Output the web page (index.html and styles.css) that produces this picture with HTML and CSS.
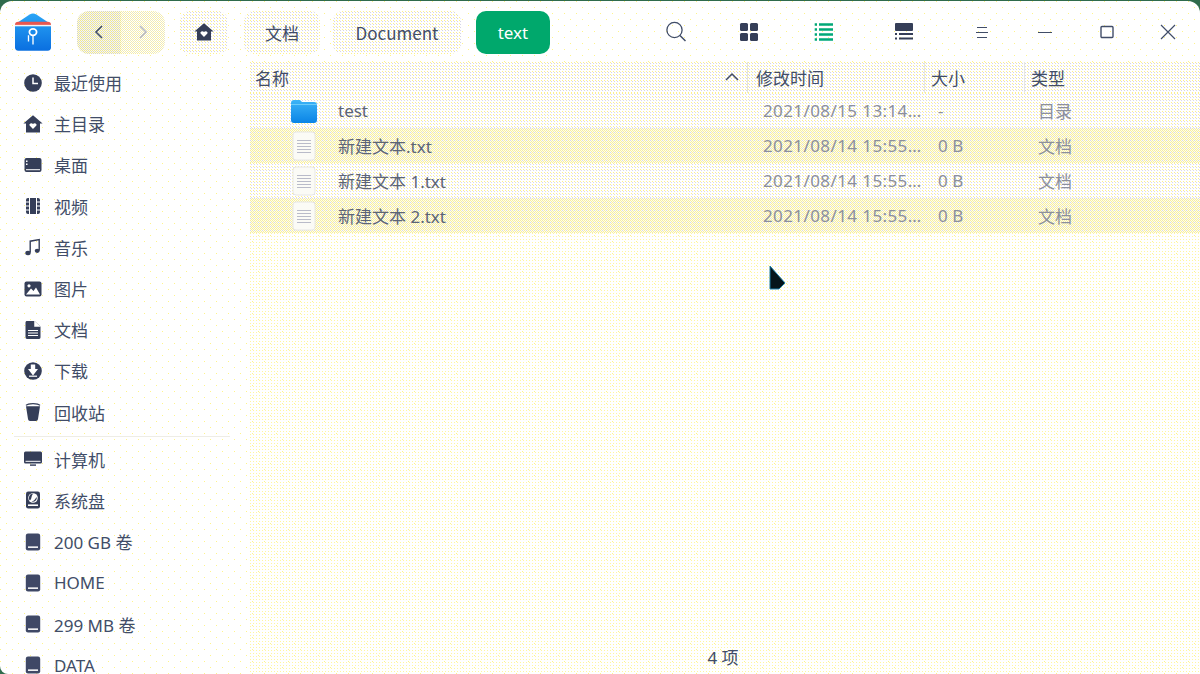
FILE: index.html
```html
<!DOCTYPE html>
<html lang="zh-CN">
<head>
<meta charset="utf-8">
<title>文件管理器</title>
<link rel="stylesheet" href="styles.css">
</head>
<body>
<svg class="defs" width="0" height="0" aria-hidden="true">
  <defs>
    <linearGradient id="blue" x1="0" y1="0" x2="0" y2="1"><stop offset="0" stop-color="#2aa5f5"/><stop offset="1" stop-color="#0a6fe0"/></linearGradient>
    <linearGradient id="fold" x1="0" y1="0" x2="0" y2="1"><stop offset="0" stop-color="#3db4f7"/><stop offset="1" stop-color="#0a84e6"/></linearGradient>
    <symbol id="i-clock" viewBox="0 0 20 20"><circle cx="10" cy="10" r="8.8" fill="#353e58"/><path d="M10 4.5V10.5H15" fill="none" stroke="#fff" stroke-width="1.5"/></symbol>
    <symbol id="i-home" viewBox="0 0 20 20"><path d="M10 1.2 19.6 9.6H17V18.4H3V9.6H.4Z" fill="#353e58"/><path d="M10 15 6.6 11.6C5.6 9.8 8.5 8.2 10 10 11.5 8.2 14.4 9.8 13.4 11.6Z" fill="#fff"/></symbol>
    <symbol id="i-desk" viewBox="0 0 20 20"><rect x="1.5" y="3" width="17" height="14" rx="2" fill="#353e58"/><rect x="3" y="14.2" width="14" height="1" fill="#fff"/><rect x="3" y="5.5" width="1.5" height="1.5" fill="#fff"/><rect x="3" y="8.5" width="1.5" height="1.5" fill="#fff"/></symbol>
    <symbol id="i-video" viewBox="0 0 20 20"><rect x="3" y="2" width="14" height="16" rx="2" fill="#353e58"/><path d="M6.5 2V18M13.5 2V18M3 6H6.5M3 10H6.5M3 14H6.5M13.5 6H17M13.5 10H17M13.5 14H17" stroke="#fff" stroke-width="1"/></symbol>
    <symbol id="i-music" viewBox="0 0 20 20"><path d="M7.2 15.5V4.2L16.2 2.6V13.5" fill="none" stroke="#353e58" stroke-width="1.4"/><ellipse cx="5" cy="16" rx="2.7" ry="2.2" fill="#353e58"/><ellipse cx="14.2" cy="13.8" rx="2.5" ry="2.1" fill="#353e58"/></symbol>
    <symbol id="i-pic" viewBox="0 0 20 20"><rect x="1.5" y="2.5" width="17" height="15" rx="2" fill="#353e58"/><circle cx="6" cy="6.8" r="1.6" fill="#fff"/><path d="M3 15.5 8 9.5 10.5 12 13 8.5 17 15.5Z" fill="#fff"/></symbol>
    <symbol id="i-doc" viewBox="0 0 20 20"><path d="M2.5 2.5C2.5 1.7 3 1 4 1H11.5L17.5 6.5V17C17.5 18.2 17 19 16 19H4C3 19 2.5 18.2 2.5 17Z" fill="#353e58"/><path d="M11.5 1V6.5H17.5" fill="#fff" stroke="#fff" stroke-width=".5"/><path d="M5 10.5H15M5 13H15M5 15.5H15" stroke="#fff" stroke-width="1"/></symbol>
    <symbol id="i-down" viewBox="0 0 20 20"><circle cx="10" cy="10" r="8.8" fill="#353e58"/><path d="M7.8 3.5H12.2V8H15L10 14.5 5 8H7.8Z" fill="#fff"/><rect x="6" y="14.6" width="8" height="1.2" fill="#fff"/></symbol>
    <symbol id="i-trash" viewBox="0 0 20 20"><path d="M3 4.2 5 17C5.2 18.3 6 19 7 19H13C14 19 14.8 18.3 15 17L17 4.2Z" fill="#353e58"/><path d="M3 3.4C5 1 15 1 17 3.4" fill="none" stroke="#353e58" stroke-width="1.2"/></symbol>
    <symbol id="i-pc" viewBox="0 0 20 20"><rect x="1" y="2.5" width="18" height="12" rx="1.5" fill="#353e58"/><rect x="2.5" y="11.8" width="15" height="1" fill="#fff"/><rect x="7" y="15.4" width="6" height="1.4" fill="#353e58"/></symbol>
    <symbol id="i-sys" viewBox="0 0 20 20"><rect x="3" y="1.5" width="14" height="17" rx="2.2" fill="#353e58"/><circle cx="10" cy="8" r="4.8" fill="#fff"/><path d="M10 3.8A4 4 0 0 0 7 10.6C9 8.5 8 6 10 3.8ZM13.8 7A4 4 0 0 1 8.6 11.6C11 11.5 12 9 13.8 7Z" fill="#353e58"/><rect x="5" y="14.4" width="10" height="1.6" fill="#fff"/></symbol>
    <symbol id="i-disk" viewBox="0 0 20 20"><rect x="2.8" y="1.5" width="14.4" height="17" rx="2.2" fill="#3f4866"/><rect x="5" y="14.4" width="10" height="1.5" fill="#fff"/></symbol>
    <symbol id="i-file" viewBox="0 0 26 30"><rect x="2" y="1" width="22" height="28" rx="3" fill="#fbfbf6" stroke="#e6e6e6" stroke-width="1"/><path d="M6 9.5H20M6 12.5H20M6 15.5H20M6 18.5H20M6 21.5H20" stroke="#b9bbc9" stroke-width="1"/></symbol>
  </defs>
</svg>

<div class="window">
  <header class="toolbar">
    <svg class="logo" viewBox="2 0.5 32 36.8" preserveAspectRatio="none">
      <path d="M2 13C2 12 3 11 4 10L15 2C17 .6 19 .6 21 2L32 10C33 11 34 12 34 13V34C34 36 33 37 31 37H5C3 37 2 36 2 34Z" fill="url(#blue)"/>
      <path d="M2 12C2 10 3 9 5 9H31C33 9 34 10 34 12Z" fill="#e8574f"/>
      <rect x="2" y="12" width="32" height="1.4" fill="#f4f4f4"/>
      <circle cx="18" cy="19" r="3.2" fill="none" stroke="#fff" stroke-width="1.6"/>
      <path d="M18 22.5V31M14 22V28" stroke="#fff" stroke-width="1.2" fill="none"/>
    </svg>
    <div class="nav">
      <button class="nav-btn dense-a" type="button"><svg width="12" height="16" viewBox="0 0 12 16"><path d="M9 2 3 8 9 14" fill="none" stroke="#414d68" stroke-width="1.6"/></svg></button>
      <button class="nav-btn dense-c" type="button"><svg width="12" height="16" viewBox="0 0 12 16"><path d="M3 2 9 8 3 14" fill="none" stroke="#b8bac4" stroke-width="1.6"/></svg></button>
    </div>
    <button class="crumb crumb-home dense-b" type="button"><svg class="ico" width="20" height="20"><use href="#i-home"/></svg></button>
    <button class="crumb crumb-doc dense-b" type="button">文档</button>
    <button class="crumb crumb-en dense-b" type="button">Document</button>
    <button class="crumb crumb-now" type="button">text</button>
    <div class="tools">
      <span class="tool"><svg width="24" height="24" viewBox="0 0 24 24"><circle cx="10.5" cy="10" r="7.6" fill="none" stroke="#414d68" stroke-width="1.3"/><path d="M16 15.5 21.5 21" stroke="#414d68" stroke-width="1.5"/></svg></span>
      <span class="tool"><svg width="20" height="20" viewBox="0 0 20 20"><rect x="1" y="1" width="8" height="8" rx="1.5" fill="#353e58"/><rect x="11" y="1" width="8" height="8" rx="1.5" fill="#353e58"/><rect x="1" y="11" width="8" height="8" rx="1.5" fill="#353e58"/><rect x="11" y="11" width="8" height="8" rx="1.5" fill="#353e58"/></svg></span>
      <span class="tool"><svg width="20" height="20" viewBox="0 0 20 20"><path d="M5 2.5H19M5 7.5H19M5 12.5H19M5 17.5H19M.7 2.5H3M.7 7.5H3M.7 12.5H3M.7 17.5H3" stroke="#00a878" stroke-width="2.4"/></svg></span>
      <span class="tool"><svg width="20" height="20" viewBox="0 0 20 20"><rect x="1" y="1" width="18" height="8" rx="1" fill="#353e58"/><path d="M5 12H19M5 16.5H19M1 12H3M1 16.5H3" stroke="#353e58" stroke-width="1.8"/></svg></span>
      <span class="tool"><svg width="16" height="16" viewBox="0 0 16 16"><path d="M3 3.5H13M2 8.5H14M3 13.5H13" stroke="#414d68" stroke-width="1"/></svg></span>
      <span class="tool"><svg width="16" height="16" viewBox="0 0 16 16"><path d="M1 8.5H15" stroke="#414d68" stroke-width="1"/></svg></span>
      <span class="tool"><svg width="16" height="16" viewBox="0 0 16 16"><rect x="2" y="2.5" width="12" height="11" rx="1" fill="none" stroke="#414d68" stroke-width="1.4"/></svg></span>
      <span class="tool"><svg width="16" height="16" viewBox="0 0 16 16"><path d="M1 1 15 15M15 1 1 15" stroke="#414d68" stroke-width="1.2"/></svg></span>
    </div>
  </header>

  <div class="body">
    <nav class="sidebar">
      <a class="side-item"><svg class="ico" width="20" height="20"><use href="#i-clock"/></svg>最近使用</a>
      <a class="side-item"><svg class="ico" width="20" height="20"><use href="#i-home"/></svg>主目录</a>
      <a class="side-item"><svg class="ico" width="20" height="20"><use href="#i-desk"/></svg>桌面</a>
      <a class="side-item"><svg class="ico" width="20" height="20"><use href="#i-video"/></svg>视频</a>
      <a class="side-item"><svg class="ico" width="20" height="20"><use href="#i-music"/></svg>音乐</a>
      <a class="side-item"><svg class="ico" width="20" height="20"><use href="#i-pic"/></svg>图片</a>
      <a class="side-item"><svg class="ico" width="20" height="20"><use href="#i-doc"/></svg>文档</a>
      <a class="side-item"><svg class="ico" width="20" height="20"><use href="#i-down"/></svg>下载</a>
      <a class="side-item"><svg class="ico" width="20" height="20"><use href="#i-trash"/></svg>回收站</a>
      <div class="side-sep"></div>
      <a class="side-item"><svg class="ico" width="20" height="20"><use href="#i-pc"/></svg>计算机</a>
      <a class="side-item"><svg class="ico" width="20" height="20"><use href="#i-sys"/></svg>系统盘</a>
      <a class="side-item"><svg class="ico" width="20" height="20"><use href="#i-disk"/></svg>200 GB 卷</a>
      <a class="side-item"><svg class="ico" width="20" height="20"><use href="#i-disk"/></svg>HOME</a>
      <a class="side-item"><svg class="ico" width="20" height="20"><use href="#i-disk"/></svg>299 MB 卷</a>
      <a class="side-item"><svg class="ico" width="20" height="20"><use href="#i-disk"/></svg>DATA</a>
    </nav>

    <main class="content">
      <div class="thead dense-b">
        <div class="th th-name">名称<svg class="sort" width="16" height="10" viewBox="0 0 16 10"><path d="M2 8 8 2 14 8" fill="none" stroke="#414d68" stroke-width="1.5"/></svg></div>
        <div class="th th-mid">修改时间</div>
        <div class="th th-mid">大小</div>
        <div class="th">类型</div>
      </div>
      <div class="rows">
        <div class="row row-light">
          <div class="cell-name"><svg class="file-ico" width="26" height="30" viewBox="0 0 26 30"><path d="M0 7C0 5 1 4 3 4H9L11 6H23C25 6 26 7 26 9V24C26 26 25 27 23 27H3C1 27 0 26 0 24Z" fill="url(#fold)"/><rect x="0" y="8" width="26" height="1" fill="#6ccbfa"/></svg>test</div>
          <div class="cell-date">2021/08/15 13:14:20</div><div class="cell-size">-</div><div class="cell-type">目录</div>
        </div>
        <div class="row row-strong">
          <div class="cell-name"><svg class="file-ico" width="26" height="30"><use href="#i-file"/></svg>新建文本.txt</div>
          <div class="cell-date">2021/08/14 15:55:10</div><div class="cell-size">0 B</div><div class="cell-type">文档</div>
        </div>
        <div class="row row-light">
          <div class="cell-name"><svg class="file-ico" width="26" height="30"><use href="#i-file"/></svg>新建文本 1.txt</div>
          <div class="cell-date">2021/08/14 15:55:10</div><div class="cell-size">0 B</div><div class="cell-type">文档</div>
        </div>
        <div class="row row-strong">
          <div class="cell-name"><svg class="file-ico" width="26" height="30"><use href="#i-file"/></svg>新建文本 2.txt</div>
          <div class="cell-date">2021/08/14 15:55:10</div><div class="cell-size">0 B</div><div class="cell-type">文档</div>
        </div>
      </div>
      <footer class="status">4 项</footer>
    </main>
  </div>
</div>

<svg class="cursor" width="20" height="28" viewBox="0 0 20 28"><path d="M2 1 17 18 11 24H2Z" fill="#05141a" stroke="#1f7fa8" stroke-width="1"/></svg>
</body>
</html>
```

FILE: styles.css
```css
* { box-sizing: border-box; }

html, body {
  margin: 0;
  height: 100%;
  overflow: hidden;
}

body {
  background: #2f6b4c;
  font-family: "Noto Sans", "Noto Sans CJK SC", sans-serif;
  font-size: 17px;
  color: #414d68;
  padding-top: 1px;
}

.defs { position: absolute; }

.window {
  height: 100%;
  display: flex;
  flex-direction: column;
  border-radius: 12px 12px 0 8px;
  overflow: hidden;
  background-color: #fff;
  background-image:
    conic-gradient(at 1px 1px, transparent 75%, #fff48a 0),
    conic-gradient(at 1px 1px, transparent 75%, #fff48a 0);
  background-size: 12px 12px;
  background-position: 0 0, 6px 6px;
}

/* dithered fills */
.dense-a {
  background-color: #fdfbe4;
  background-image:
    conic-gradient(at 1px 1px, transparent 75%, #d6d6cc 0),
    conic-gradient(at 1px 1px, transparent 75%, #ece496 0);
  background-size: 2px 2px;
  background-position: 0 0, 1px 1px;
}

.dense-b {
  background-color: #fff;
  background-image:
    conic-gradient(at 1px 1px, transparent 75%, #fdf08c 0),
    conic-gradient(at 1px 1px, transparent 75%, #d4d4e8 0);
  background-size: 3px 3px;
  background-position: 0 0, 1px 1px;
}

.dense-c {
  background-color: #fff;
  background-image:
    conic-gradient(at 1px 1px, transparent 75%, #f8efa0 0),
    conic-gradient(at 1px 1px, transparent 75%, #ece8c0 0);
  background-size: 2px 2px;
  background-position: 0 0, 1px 1px;
}

/* toolbar */
.toolbar {
  height: 61px;
  flex: none;
  display: flex;
  align-items: center;
  padding-left: 15px;
  padding-top: 1px;
}

.logo { width: 36px; height: 38px; flex: none; }

.nav {
  display: flex;
  height: 43px;
  margin-left: 26px;
  border-radius: 12px;
  overflow: hidden;
}

.nav-btn {
  width: 44px;
  border: 0;
  padding: 0;
  display: flex;
  align-items: center;
  justify-content: center;
}

.crumb {
  height: 43px;
  border: 0;
  padding: 0;
  margin-left: 15px;
  border-radius: 10px;
  font: inherit;
  color: #414d68;
  display: flex;
  align-items: center;
  justify-content: center;
}

.crumb-home { width: 48px; }
.crumb-doc { width: 76px; margin-left: 16px; }
.crumb-en { width: 128px; margin-left: 13px; font-family: "Noto Sans CJK SC", sans-serif; }
.crumb-now { width: 74px; background: #00a86c; color: #fff; }

.tools {
  margin-left: auto;
  display: grid;
  grid-template-columns: 72px 74px 76px 84px 72px 54px 70px 52px;
  padding-right: 6px;
}

.tool { display: flex; align-items: center; justify-content: center; }

/* main area */
.body { flex: 1; min-height: 0; display: flex; }

.sidebar {
  width: 250px;
  flex: none;
  overflow: hidden;
}

.side-item {
  height: 41.2px;
  display: flex;
  align-items: center;
  gap: 11px;
  padding-left: 23px;
  white-space: nowrap;
}

.ico { flex: none; }

.side-sep {
  height: 1px;
  margin: 3px 20px 2px 14px;
  background: #eeede6;
}

.content {
  flex: 1;
  min-width: 0;
  display: flex;
  flex-direction: column;
  background-image:
    conic-gradient(at 1px 1px, transparent 75%, #fff6a0 0);
  background-size: 3px 3px;
}

.thead, .row {
  display: grid;
  grid-template-columns: 505px 175px 100px 1fr;
  align-items: center;
}

.thead { height: 31px; flex: none; }

.th {
  height: 100%;
  display: flex;
  align-items: center;
  padding-left: 1px;
}

.th-name {
  position: relative;
  padding-left: 5px;
  margin-right: 7px;
  border-right: 1px solid #e4e4dc;
}

.th-mid {
  margin-right: 5px;
  border-right: 1px solid #e8e8e0;
}

.sort { position: absolute; right: 7px; top: 10px; }

.rows { flex: 1; min-height: 0; }

.row { height: 35px; color: #5b6478; }

.row-light {
  background-color: #fff;
  background-image:
    conic-gradient(at 1px 1px, transparent 75%, #fdf08c 0),
    conic-gradient(at 1px 1px, transparent 75%, #d8d8f0 0);
  background-size: 3px 3px;
  background-position: 0 0, 1px 1px;
}

.row-strong {
  background-color: #fefdee;
  background-image:
    conic-gradient(at 1px 1px, transparent 75%, #d8d8f0 0),
    conic-gradient(at 1px 1px, transparent 75%, #f6eea0 0),
    conic-gradient(at 1px 1px, transparent 75%, #f6eea0 0);
  background-size: 4px 4px, 2px 2px, 2px 2px;
  background-position: 0 0, 0 0, 1px 1px;
}

.cell-name {
  display: flex;
  align-items: center;
  padding-left: 41px;
  gap: 21px;
  white-space: nowrap;
}

.file-ico { flex: none; }

.cell-date, .cell-size, .cell-type {
  color: #8b8f9e;
  white-space: nowrap;
  overflow: hidden;
  text-overflow: ellipsis;
}

.cell-date { padding: 0 7px 0 8px; letter-spacing: .4px; }
.cell-size { padding-left: 8px; }
.cell-type { padding-left: 8px; }

.status {
  height: 36px;
  flex: none;
  display: flex;
  align-items: center;
  justify-content: center;
  padding-right: 4px;
}

.cursor {
  position: absolute;
  left: 768px;
  top: 265px;
}
```
